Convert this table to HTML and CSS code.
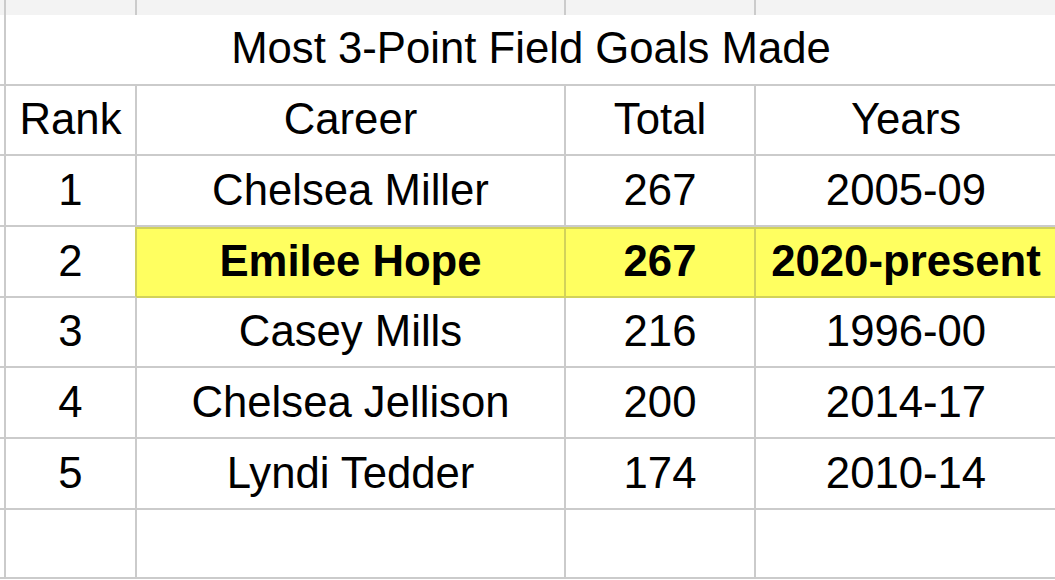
FILE: index.html
```html
<!DOCTYPE html>
<html>
<head>
<meta charset="utf-8">
<link rel="stylesheet" href="styles.css">
</head>
<body>
<div class="sheet">
  <div class="cell strip gutter"></div>
  <div class="cell strip"></div>
  <div class="cell strip"></div>
  <div class="cell strip"></div>
  <div class="cell strip last"></div>

  <div class="cell gutter"></div>
  <div class="cell title">Most 3-Point Field Goals Made</div>

  <div class="cell gutter"></div>
  <div class="cell">Rank</div>
  <div class="cell">Career</div>
  <div class="cell">Total</div>
  <div class="cell last">Years</div>

  <div class="cell gutter"></div>
  <div class="cell">1</div>
  <div class="cell">Chelsea Miller</div>
  <div class="cell">267</div>
  <div class="cell last">2005-09</div>

  <div class="cell gutter"></div>
  <div class="cell pre-hl">2</div>
  <div class="cell hl">Emilee Hope</div>
  <div class="cell hl">267</div>
  <div class="cell hl last">2020-present</div>

  <div class="cell gutter"></div>
  <div class="cell">3</div>
  <div class="cell">Casey Mills</div>
  <div class="cell">216</div>
  <div class="cell last">1996-00</div>

  <div class="cell gutter"></div>
  <div class="cell">4</div>
  <div class="cell">Chelsea Jellison</div>
  <div class="cell">200</div>
  <div class="cell last">2014-17</div>

  <div class="cell gutter"></div>
  <div class="cell">5</div>
  <div class="cell">Lyndi Tedder</div>
  <div class="cell">174</div>
  <div class="cell last">2010-14</div>

  <div class="cell gutter"></div>
  <div class="cell"></div>
  <div class="cell"></div>
  <div class="cell"></div>
  <div class="cell last"></div>
</div>
</body>
</html>
```

FILE: styles.css
```css
html, body {
  margin: 0;
  padding: 0;
  background: #ffffff;
  overflow: hidden;
}

.sheet {
  display: grid;
  width: 1056px;
  grid-template-columns: 6px 131px 429px 190px 300px;
  grid-template-rows: 15px 71px 70px 71px 71px 70px 71px 71px 69px;
  font-family: "Liberation Sans", Arial, sans-serif;
  font-size: 43.7px;
  color: #000;
}

.cell {
  box-sizing: border-box;
  display: flex;
  align-items: center;
  justify-content: center;
  border-right: 2px solid #cbcbcb;
  border-bottom: 2px solid #cbcbcb;
  white-space: nowrap;
  padding-bottom: 2px;
}

.cell.last {
  border-right: none;
}

.strip {
  background: #f3f3f3;
  border-bottom: none;
}

.title {
  grid-column: 2 / span 4;
  border-right: none;
  padding-bottom: 4px;
}

.pre-hl {
  border-right-color: #d2d25a;
}

.hl {
  background: #ffff60;
  font-weight: bold;
  border-right-color: #d2d25a;
  border-bottom-color: #d2d25a;
  box-shadow: inset 0 2px 0 #d2d25a;
}
```
